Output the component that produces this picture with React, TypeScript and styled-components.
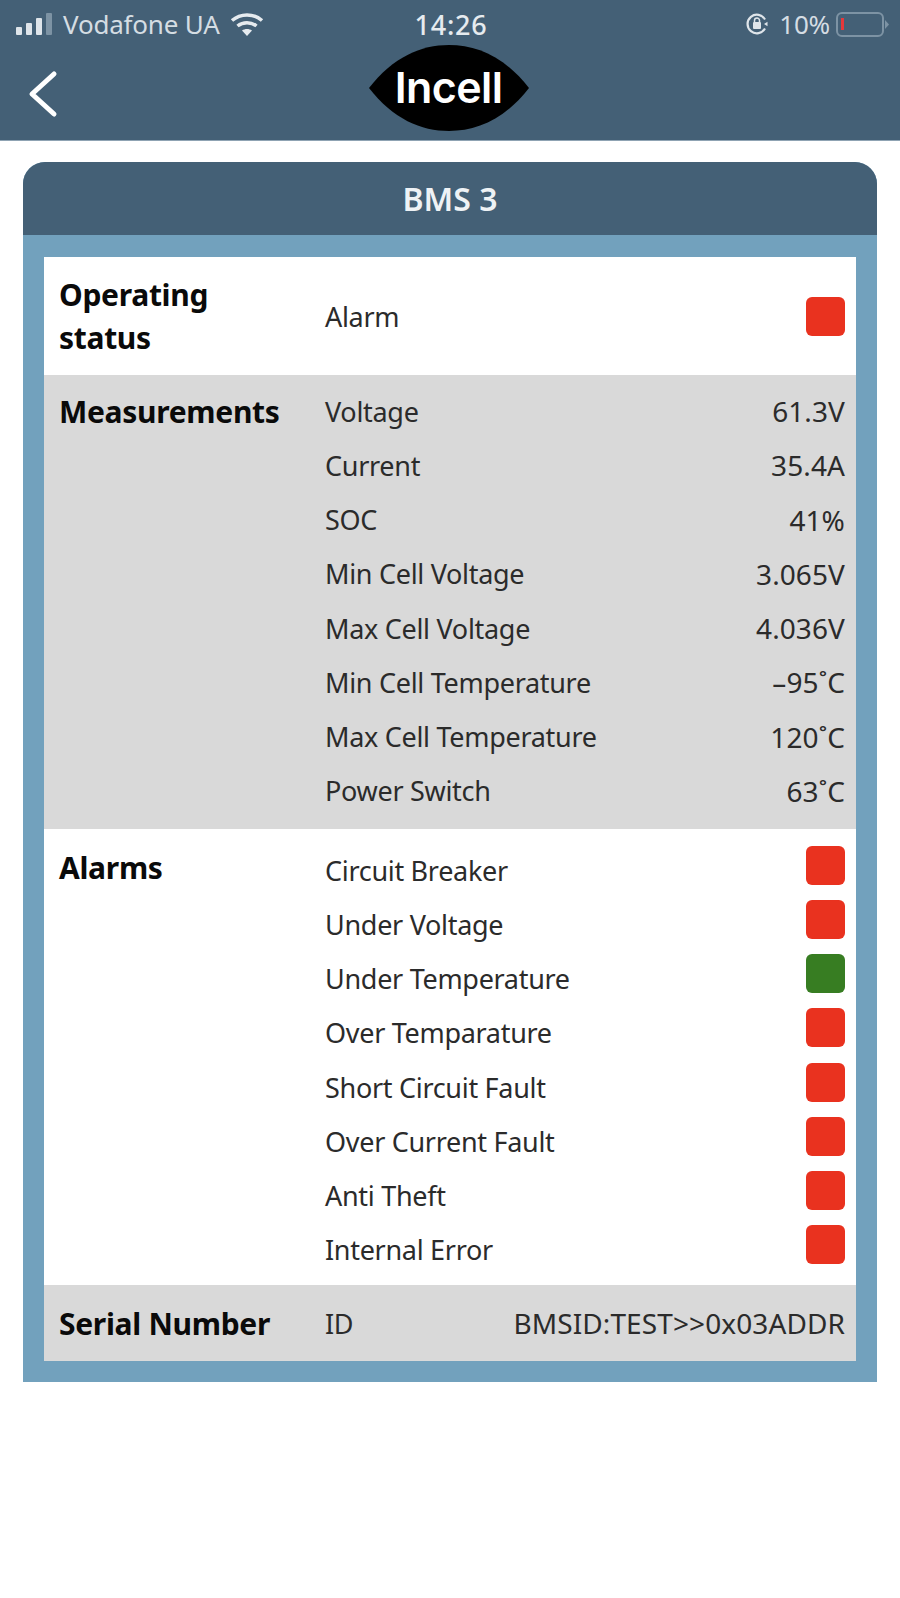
import React from 'react';
import styled, { createGlobalStyle } from 'styled-components';

const GlobalStyle = createGlobalStyle`
  html, body { margin: 0; padding: 0; background: #fff; }
  body { font-family: 'Noto Sans', 'Open Sans', sans-serif; }
`;

const measurements = [
  ['Voltage', '61.3V'],
  ['Current', '35.4A'],
  ['SOC', '41%'],
  ['Min Cell Voltage', '3.065V'],
  ['Max Cell Voltage', '4.036V'],
  ['Min Cell Temperature', '–95˚C'],
  ['Max Cell Temperature', '120˚C'],
  ['Power Switch', '63˚C'],
];

const alarms = [
  { name: 'Circuit Breaker', ok: false },
  { name: 'Under Voltage', ok: false },
  { name: 'Under Temperature', ok: true },
  { name: 'Over Temparature', ok: false },
  { name: 'Short Circuit Fault', ok: false },
  { name: 'Over Current Fault', ok: false },
  { name: 'Anti Theft', ok: false },
  { name: 'Internal Error', ok: false },
];

const Page = styled.div`
  width: 900px;
  height: 1598px;
  background: #fff;
  overflow: hidden;
`;

const TopBar = styled.div`
  height: 141px;
  background: #446076;
  border-bottom: 1px solid #8fa3b3;
  box-sizing: border-box;
`;

const StatusBar = styled.div`
  height: 48px;
  padding: 0 10px 0 16px;
  display: grid;
  grid-template-columns: 1fr auto 1fr;
  align-items: center;
  color: #d5dde3;
  font-size: 26px;
  letter-spacing: -0.2px;
`;

const StatusLeft = styled.div`
  display: flex;
  align-items: center;
  gap: 10px;
`;

const StatusRight = styled.div`
  display: flex;
  align-items: center;
  justify-content: flex-end;
  gap: 6px;
`;

const Clock = styled.div`
  margin-left: -4px;
  color: #e6ebef;
  font-weight: 500;
  font-size: 27px;
  letter-spacing: 0.8px;
`;

const RotationIcon = styled.svg`
  margin-right: 3px;
`;

const NavBar = styled.div`
  height: 91px;
  padding: 0 31px 0 28px;
  display: grid;
  grid-template-columns: 1fr auto 1fr;
  align-items: center;
`;

const Logo = styled.div`
  position: relative;
  width: 160px;
  height: 86px;
  margin-top: -12px;
  display: flex;
  align-items: center;
  justify-content: center;
`;

const LogoShape = styled.svg`
  position: absolute;
  inset: 0;
`;

const LogoText = styled.span`
  position: relative;
  color: #fff;
  font-family: 'Inter', sans-serif;
  font-weight: 600;
  font-size: 43px;
  letter-spacing: -0.6px;
  line-height: 1;
`;

const Card = styled.div`
  margin: 21px 23px 0;
  background: #72a1bd;
  border-radius: 22px 22px 0 0;
  overflow: hidden;
`;

const CardTitle = styled.div`
  height: 73px;
  background: #446076;
  color: #eef2f5;
  display: flex;
  align-items: center;
  justify-content: center;
  font-size: 32px;
  font-weight: 600;
`;

const CardBody = styled.div`
  padding: 22px 21px 21px;
`;

const Section = styled.div<{ $shaded?: boolean; $height: number; $pad?: number }>`
  display: grid;
  grid-template-columns: 266px 1fr;
  box-sizing: border-box;
  height: ${({ $height }) => $height}px;
  padding: ${({ $pad }) => $pad ?? 0}px 11px 0 15px;
  background: ${({ $shaded }) => ($shaded ? '#d9d9d9' : '#fff')};
`;

const Heading = styled.div`
  color: #0a0a0a;
  font-size: 30px;
  font-weight: 700;
  letter-spacing: -0.3px;
  line-height: 43px;
  height: 54px;
  display: flex;
  align-items: center;
`;

const AlarmHeading = styled(Heading)`
  margin-top: -3px;
`;

const CenteredHeading = styled(Heading)`
  height: auto;
  width: 200px;
  align-self: center;
`;

const WideHeading = styled(CenteredHeading)`
  width: auto;
`;

const Rows = styled.div`
  display: flex;
  flex-direction: column;
`;

const Row = styled.div<{ $height?: number }>`
  height: ${({ $height }) => $height ?? 54.25}px;
  display: flex;
  align-items: center;
  justify-content: space-between;
  color: #2b2b2b;
  font-size: 27px;
  letter-spacing: -0.3px;
`;

const Value = styled.span`
  font-size: 28px;
  letter-spacing: 0.1px;
`;

const Lamp = styled.div<{ $ok?: boolean }>`
  width: 39px;
  height: 39px;
  border-radius: 6px;
  background: ${({ $ok }) => ($ok ? '#377d22' : '#e9321f')};
`;

const AlarmLamp = styled(Lamp)`
  margin-top: -10px;
`;

const App = () => (
  <Page>
    <GlobalStyle />
    <TopBar>
      <StatusBar>
        <StatusLeft>
          <svg width="37" height="24" viewBox="0 0 37 24" fill="#dfe5ea">
            <rect x="0" y="15" width="6" height="8" rx="1" />
            <rect x="10" y="11" width="6" height="12" rx="1" />
            <rect x="20" y="6" width="6" height="17" rx="1" />
            <rect x="30" y="1" width="6" height="22" rx="1" fill="#7d93a4" />
          </svg>
          <span>Vodafone UA</span>
          <svg width="34" height="25" viewBox="0 0 34 25" fill="none" stroke="#e6ebef" strokeWidth="3.5">
            <path d="M2 8.5C10.5 1 23.5 1 32 8.5" />
            <path d="M7.5 14C13 9.5 21 9.5 26.5 14" />
            <path d="M17 24L12 18.5C15 16.5 19 16.5 22 18.5Z" fill="#e6ebef" stroke="none" />
          </svg>
        </StatusLeft>
        <Clock>14:26</Clock>
        <StatusRight>
          <RotationIcon width="26" height="26" viewBox="0 0 26 26" fill="none" stroke="#dfe5ea" strokeWidth="2.2">
            <path d="M21 17.5A9.3 9.3 0 1 1 21 8.5" />
            <path d="M20 13l3.5-2.2v4.4Z" fill="#dfe5ea" stroke="none" />
            <rect x="9" y="11" width="8" height="7" rx="1" fill="#dfe5ea" stroke="none" />
            <path d="M10.5 11V9.5a2.5 2.5 0 0 1 5 0V11" strokeWidth="1.5" />
          </RotationIcon>
          <span>10%</span>
          <svg width="54" height="27" viewBox="0 0 54 27" fill="none">
            <rect x="1" y="2" width="46" height="23" rx="5" stroke="#7d93a4" strokeWidth="2" />
            <rect x="5" y="7" width="3" height="12" fill="#e5383b" />
            <path d="M49 9l4 4.5-4 4.5Z" fill="#7d93a4" />
          </svg>
        </StatusRight>
      </StatusBar>
      <NavBar>
        <svg width="30" height="48" viewBox="0 0 30 48" fill="none" stroke="#fff" strokeWidth="5" strokeLinecap="round" strokeLinejoin="round">
          <path d="M26 4L4 24L26 44" />
        </svg>
        <Logo>
          <LogoShape width="160" height="86" viewBox="0 0 160 86">
            <path d="M0 43C24 12 52 0 80 0C108 0 136 12 160 43C136 74 108 86 80 86C52 86 24 74 0 43Z" fill="#000" />
          </LogoShape>
          <LogoText>Incell</LogoText>
        </Logo>
      </NavBar>
    </TopBar>

    <Card>
      <CardTitle>BMS 3</CardTitle>
      <CardBody>
        <Section $height={118}>
          <CenteredHeading>Operating status</CenteredHeading>
          <Row $height={118}>
            <span>Alarm</span>
            <Lamp />
          </Row>
        </Section>
        <Section $shaded $height={454} $pad={9}>
          <Heading>Measurements</Heading>
          <Rows>
            {measurements.map(([label, value]) => (
              <Row key={label}>
                <span>{label}</span>
                <Value>{value}</Value>
              </Row>
            ))}
          </Rows>
        </Section>
        <Section $height={456} $pad={14}>
          <AlarmHeading>Alarms</AlarmHeading>
          <Rows>
            {alarms.map(({ name, ok }) => (
              <Row key={name}>
                <span>{name}</span>
                <AlarmLamp $ok={ok} />
              </Row>
            ))}
          </Rows>
        </Section>
        <Section $shaded $height={76}>
          <WideHeading>Serial Number</WideHeading>
          <Row $height={76}>
            <span>ID</span>
            <Value>BMSID:TEST&gt;&gt;0x03ADDR</Value>
          </Row>
        </Section>
      </CardBody>
    </Card>
  </Page>
);

export default App;
